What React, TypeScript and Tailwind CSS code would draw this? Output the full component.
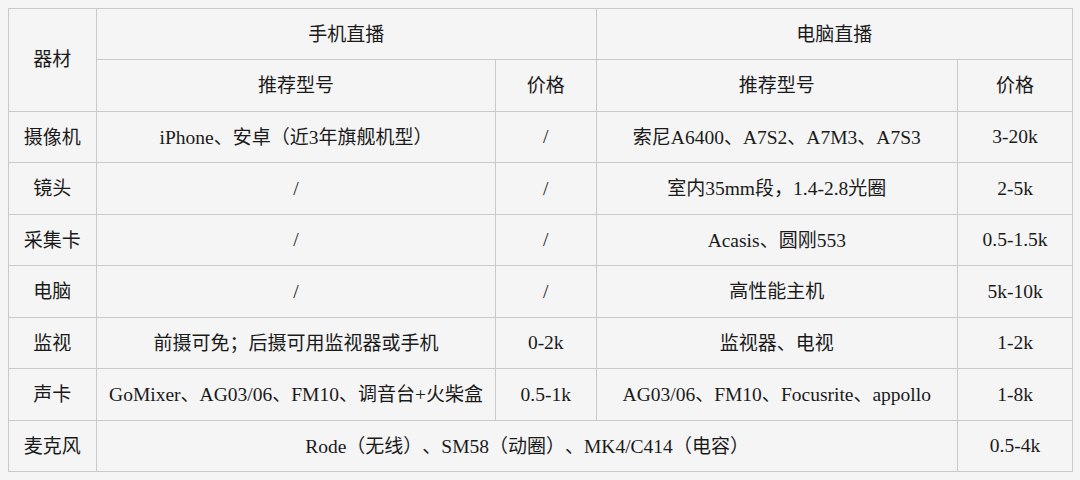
import React from "react";

type Row = { name: string; cells: { text: string; span?: number }[] };

const rows: Row[] = [
  { name: "摄像机", cells: [{ text: "iPhone、安卓（近3年旗舰机型）" }, { text: "/" }, { text: "索尼A6400、A7S2、A7M3、A7S3" }, { text: "3-20k" }] },
  { name: "镜头", cells: [{ text: "/" }, { text: "/" }, { text: "室内35mm段，1.4-2.8光圈" }, { text: "2-5k" }] },
  { name: "采集卡", cells: [{ text: "/" }, { text: "/" }, { text: "Acasis、圆刚553" }, { text: "0.5-1.5k" }] },
  { name: "电脑", cells: [{ text: "/" }, { text: "/" }, { text: "高性能主机" }, { text: "5k-10k" }] },
  { name: "监视", cells: [{ text: "前摄可免；后摄可用监视器或手机" }, { text: "0-2k" }, { text: "监视器、电视" }, { text: "1-2k" }] },
  { name: "声卡", cells: [{ text: "GoMixer、AG03/06、FM10、调音台+火柴盒" }, { text: "0.5-1k" }, { text: "AG03/06、FM10、Focusrite、appollo" }, { text: "1-8k" }] },
  { name: "麦克风", cells: [{ text: "Rode（无线）、SM58（动圈）、MK4/C414（电容）", span: 3 }, { text: "0.5-4k" }] },
];

const CJK = /([\u3000-\u303f\u4e00-\u9fff\uff00-\uffef]+)/;

function Mixed({ text }: { text: string }) {
  const parts = text.split(CJK).filter((p) => p.length > 0);
  return (
    <>
      {parts.map((p, i) =>
        CJK.test(p) ? (
          <span key={i} className="font-['Noto_Sans_CJK_SC',sans-serif] text-[19px]">
            {p}
          </span>
        ) : (
          <span key={i} className="font-['Liberation_Serif',serif]">
            {p}
          </span>
        )
      )}
    </>
  );
}

const td = "border border-[#c9c9c9] text-center align-middle text-[19.5px] text-[#1a1a1a] whitespace-nowrap p-0";

export default function App() {
  return (
    <div className="w-[1080px] h-[480px] bg-[#f5f5f5] pt-[7.5px] pl-[7.5px] font-['Liberation_Serif',serif] [text-spacing-trim:space-all]">
      <table className="table-fixed border-collapse w-[1064.5px]">
        <colgroup>
          <col className="w-[88.5px]" />
          <col className="w-[399px]" />
          <col className="w-[100.5px]" />
          <col className="w-[361.5px]" />
          <col className="w-[115px]" />
        </colgroup>
        <tbody>
          <tr className="h-[51.6px]">
            <td rowSpan={2} className={td}><Mixed text="器材" /></td>
            <td colSpan={2} className={td}><Mixed text="手机直播" /></td>
            <td colSpan={2} className={td}><Mixed text="电脑直播" /></td>
          </tr>
          <tr className="h-[51.6px]">
            <td className={td}><Mixed text="推荐型号" /></td>
            <td className={td}><Mixed text="价格" /></td>
            <td className={td}><Mixed text="推荐型号" /></td>
            <td className={td}><Mixed text="价格" /></td>
          </tr>
          {rows.map((r) => (
            <tr key={r.name} className="h-[51.5px]">
              <td className={td}><Mixed text={r.name} /></td>
              {r.cells.map((c, i) => (
                <td key={i} colSpan={c.span} className={td}>
                  <Mixed text={c.text} />
                </td>
              ))}
            </tr>
          ))}
        </tbody>
      </table>
    </div>
  );
}
